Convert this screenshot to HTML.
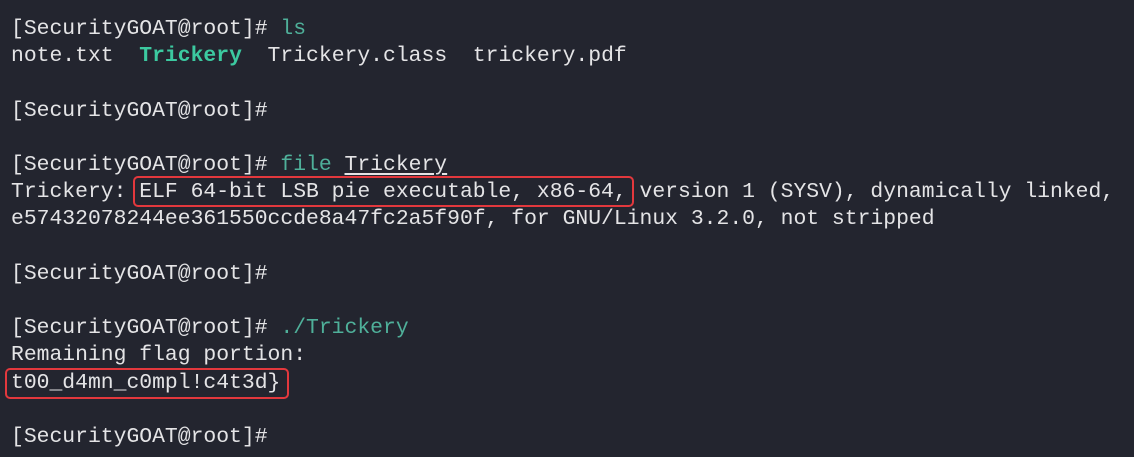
<!DOCTYPE html>
<html><head><meta charset="utf-8"><style>
html,body{margin:0;padding:0;width:1134px;height:457px;overflow:hidden;background:#23252f;}
pre{margin:0;position:absolute;left:11px;top:16px;font-family:"Liberation Mono","DejaVu Sans Mono",monospace;font-size:21.38px;line-height:27.2px;color:#e4e4e6;white-space:pre;}
.c{color:#4fb09a;}
.b{color:#3cc9a0;font-weight:bold;}
.u{text-decoration:underline;text-underline-offset:3px;}
.box{position:absolute;border:2.5px solid #e2383d;border-radius:5px;box-sizing:border-box;}
</style></head><body>
<pre>[SecurityGOAT@root]# <span class="c">ls</span>
note.txt  <span class="b">Trickery</span>  Trickery.class  trickery.pdf

[SecurityGOAT@root]#

[SecurityGOAT@root]# <span class="c">file</span> <span class="u">Trickery</span>
Trickery: ELF 64-bit LSB pie executable, x86-64, version 1 (SYSV), dynamically linked,
e57432078244ee361550ccde8a47fc2a5f90f, for GNU/Linux 3.2.0, not stripped

[SecurityGOAT@root]#

[SecurityGOAT@root]# <span class="c">./Trickery</span>
Remaining flag portion:
t00_d4mn_c0mpl!c4t3d}

[SecurityGOAT@root]#</pre>
<div class="box" style="left:133px;top:176px;width:501px;height:31px;"></div>
<div class="box" style="left:5px;top:368px;width:284px;height:31px;"></div>
</body></html>
